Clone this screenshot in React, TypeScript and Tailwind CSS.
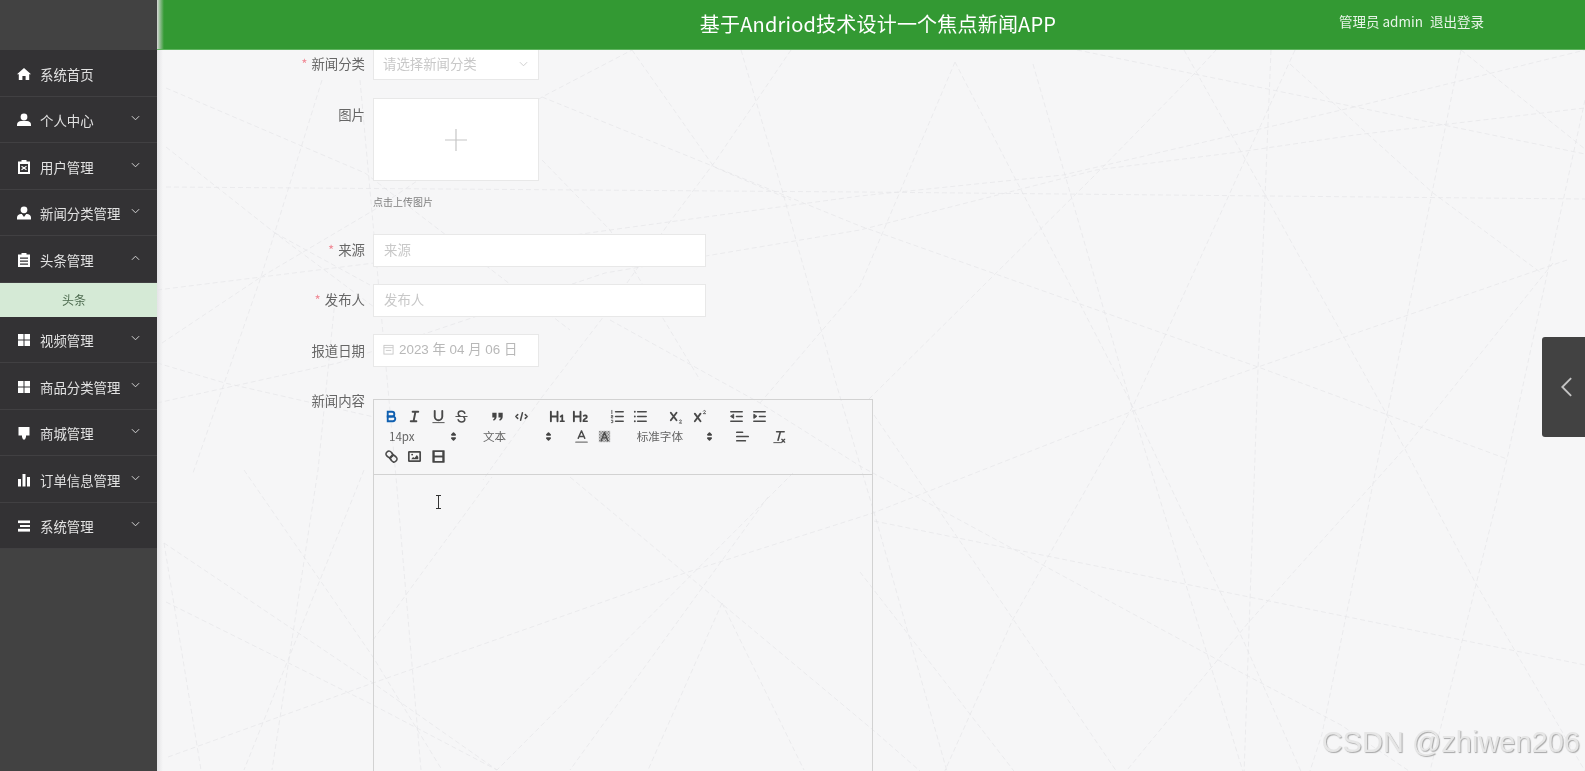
import React from 'react';
import { ReactNode } from 'react';

const lines: string[] = [
  // right half
  '955,62 860,286 760,403', '955,62 1128,397 1244,642 1340,860', '1033,64 1133,411 1244,775', '157,290 374,263 610,230 860,196 1063,175 1350,108 1585,50',
  '157,403 338,363 605,273 860,230 1096,170 1239,152 1355,135 1585,108', '166,187 860,192 1267,196 1585,199', '869,399 1091,179 1195,73 1216,50',
  '1184,50 1267,198 1387,415 1475,582 1585,771', '1295,50 1133,406 1013,619 943,775', '1271,50 1258,369 1244,775', '1077,50 1585,154',
  '1461,50 1387,415 1322,734 1310,771', '1585,100 1507,459 1429,775', '542,97 710,165 860,226 1258,367 1507,459',
  '168,757 373,683 685,573 873,513 1133,411 1258,367 1567,260', '1461,50 1585,149', '1290,64 1433,193 1540,272', '1553,263 1405,448 1248,623 1123,775',
  '874,521 1585,665', '610,320 760,403 860,466 1244,674 1341,725 1415,775', '874,415 1013,619 1119,775', '741,50 782,190 836,383 878,526 948,775', '860,572 1017,775',
  // lower left
  '164,543 373,683 497,770', '166,602 373,705 497,770', '373,640 492,477', '360,80 396,477 421,770', '244,470 373,657 442,770', '364,470 244,770',
  '335,300 318,470 272,770', '164,543 201,770', '570,477 873,730 920,771', '793,473 497,770', '722,603 648,770', '722,603 804,770', '768,497 570,770',
  // upper left
  '166,88 365,173 570,330', '166,147 275,233 374,307', '322,80 261,277 193,473', '162,343 261,277 374,210 542,97 632,50', '632,50 714,167 791,200',
  '791,50 714,163 669,223 601,320 542,397 483,480', '157,363 225,383 374,417', '542,160 610,230 700,380', '275,233 370,285',
];

const Ico = ({ children }: { children: ReactNode }) => (
  <svg viewBox="0 0 14 14" className="w-[14px] h-[14px] shrink-0" fill="#fff">{children}</svg>
);

const HomeIcon = () => <Ico><path d="M7 1l7 6.2h-1.8V13H8.6V9H5.4v4H1.8V7.2H0z" /></Ico>;
const UserIcon = () => <Ico><circle cx="7" cy="4" r="3.4" /><path d="M0 13v-1.6C0 9.5 2 8 4 8h6c2 0 4 1.5 4 3.4V13z" /></Ico>;
const ClipXIcon = () => <Ico><path fillRule="evenodd" d="M4.5 0h5v1.5H13V14H1V1.5h3.5zM3 4v8h8V4zm1.8 1.8L7 7.2l2.2-1.4.6.9L7.9 8l1.9 1.3-.6.9L7 8.8l-2.2 1.4-.6-.9L6.1 8 4.2 6.7z" /></Ico>;
const UserTieIcon = () => <Ico><circle cx="7" cy="3.8" r="3.4" /><path d="M0 13.5v-2C0 9.3 2 8 4 8h.8L7 11l2.2-3h.8c2 0 4 1.3 4 3.5v2z" /></Ico>;
const ClipIcon = () => <Ico><path fillRule="evenodd" d="M4.5 0h5v1.5H13V14H1V1.5h3.5zM3 4.5v1.3h8V4.5zm0 3v1.3h8V7.5zm0 3v1.3h8v-1.3z" /></Ico>;
const GridIcon = () => <Ico><rect x="1" y="1" width="5.5" height="5.5" /><rect x="7.5" y="1" width="5.5" height="5.5" /><rect x="1" y="7.5" width="5.5" height="5.5" /><rect x="7.5" y="7.5" width="5.5" height="5.5" /></Ico>;
const StoreIcon = () => <Ico><path d="M1.5 1h11v8.5H9V11l-1 2.5H6L5 11V9.5H1.5z" /></Ico>;
const ChartIcon = () => <Ico><rect x="1" y="6" width="3" height="7.5" /><rect x="5.5" y="1" width="3" height="12.5" /><rect x="10" y="4" width="3" height="9.5" /></Ico>;
const MenuIcon = () => <Ico><rect x="1" y="1.5" width="12" height="2.6" /><rect x="3" y="6" width="10" height="2" /><rect x="1" y="9.8" width="12" height="2.8" /></Ico>;

const Chevron = ({ up }: { up?: boolean }) => (
  <svg viewBox="0 0 10 6" className="w-[9px] h-[6px] mb-[4px] ml-auto mr-[17px]" fill="none" stroke="#d5d5d5" strokeWidth="1.1">
    <path d={up ? 'M1 5l4-4 4 4' : 'M1 1l4 4 4-4'} />
  </svg>
);

const menu1 = [
  { icon: <HomeIcon />, label: '系统首页', arrow: false },
  { icon: <UserIcon />, label: '个人中心', arrow: true },
  { icon: <ClipXIcon />, label: '用户管理', arrow: true },
  { icon: <UserTieIcon />, label: '新闻分类管理', arrow: true },
];
const menu2 = [
  { icon: <GridIcon />, label: '视频管理' },
  { icon: <GridIcon />, label: '商品分类管理' },
  { icon: <StoreIcon />, label: '商城管理' },
  { icon: <ChartIcon />, label: '订单信息管理' },
  { icon: <MenuIcon />, label: '系统管理' },
];

const MenuItem = ({ icon, label, arrow, up }: { icon: ReactNode; label: string; arrow?: boolean; up?: boolean }) => (
  <div className="h-[46.5px] flex items-center pl-[17px] pt-[2px] bg-[#333234] border-b border-[#414042] text-[13.4px] text-[#e2e2e2]">
    {icon}
    <span className="ml-[9px]">{label}</span>
    {arrow && <Chevron up={up} />}
  </div>
);

const Q = ({ children, w = 'w-[23.33px]' }: { children: ReactNode; w?: string }) => (
  <span className={`${w} h-[20px] flex items-center justify-center shrink-0`}>
    <svg viewBox="0 0 18 18" className="w-[17px] h-[17px]" fill="none" stroke="#4a4a4a" strokeWidth="2" strokeLinecap="round" strokeLinejoin="round">{children}</svg>
  </span>
);

const Group = ({ children }: { children: ReactNode }) => <span className="flex mr-[13px]">{children}</span>;

const Picker = ({ label, w }: { label: string; w: string }) => (
  <span className={`${w} h-[20px] mr-[13px] pl-2 flex items-center justify-between text-[11.6px] text-[#666] shrink-0`}>
    <span className="pt-[2px]">{label}</span>
    <svg viewBox="0 0 18 18" className="w-[15px] h-[15px] mr-[1px]" fill="none" stroke="#444" strokeWidth="2" strokeLinejoin="round" strokeLinecap="round">
      <polygon points="7 11 9 13 11 11 7 11" />
      <polygon points="7 7 9 5 11 7 7 7" />
    </svg>
  </span>
);

const Label = ({ text, required, className = '' }: { text: string; required?: boolean; className?: string }) => (
  <label className={`block w-[216px] shrink-0 pr-2 text-right text-[13.4px] text-[#666] ${className}`}>
    {required && <span className="text-[#f08a96] mr-1">*</span>}
    {text}
  </label>
);

const TextRow = ({ label, className }: { label: string; className: string }) => (
  <div className={`flex items-center ${className}`}>
    <Label text={label} required className="-mt-[2px]" />
    <div className="w-[333px] h-[33px] bg-white border border-[#e8e8e8] pl-[10px] pb-[2px] flex items-center text-[13.4px] text-[#c8c8c8]">{label}</div>
  </div>
);

export default function App() {
  return (
    <div className="h-screen w-full flex overflow-hidden bg-[#f6f6f7] blur-[0.3px] font-['Noto_Sans_CJK_SC','Noto_Sans',sans-serif]">
      <aside className="w-[157px] shrink-0 bg-[#424242]">
        <div className="h-[50px]" />
        {menu1.map(m => <MenuItem key={m.label} {...m} />)}
        <MenuItem icon={<ClipIcon />} label="头条管理" arrow up />
        <div className="h-[34px] bg-[#d5ead6] flex items-center justify-center pr-[9px] text-[12px] text-[#4d6b4f]">头条</div>
        {menu2.map(m => <MenuItem key={m.label} {...m} arrow />)}
      </aside>

      <div className="flex-1 flex flex-col min-w-0">
        <header className="h-[50px] shrink-0 relative flex items-center justify-center pl-[14px] pb-[2px] text-white bg-[linear-gradient(90deg,#d8d8d8,#339933_7px)] border-b border-[#5fb45f]">
          <h1 className="text-[20px] font-normal tracking-[0.2px]">基于Andriod技术设计一个焦点新闻APP</h1>
          <div className="absolute left-[1182px] top-[11px] flex gap-[7px] text-[13.5px] text-[#e8f4e8]">
            <span>管理员 admin</span>
            <span>退出登录</span>
          </div>
        </header>

        <main className="flex-1 relative overflow-hidden bg-[linear-gradient(90deg,#e4e4e6,#f6f6f7_6px)]">
          <svg viewBox="157 50 1428 721" className="absolute inset-0 w-[1428px] h-[721px]" fill="none" stroke="#e5e5e8" strokeWidth="0.7" strokeDasharray="5 3">
            {lines.map(p => <polyline key={p} points={p} />)}
          </svg>

          <form className="relative">
            <div className="flex items-center h-[30px]">
              <Label text="新闻分类" required className="-mt-[3px]" />
              <div className="w-[166px] h-[30px] bg-white border-b border-x border-[#e8e8e8] pl-[9px] pr-[10px] pb-[2px] flex items-center justify-between text-[13.4px] text-[#c8c8c8]">
                请选择新闻分类
                <svg viewBox="0 0 10 6" className="w-[9px] h-[6px]" fill="none" stroke="#c8c8c8"><path d="M1 1l4 4 4-4" /></svg>
              </div>
            </div>

            <div className="flex mt-[18px]">
              <Label text="图片" className="pt-[6px]" />
              <div className="w-[166px] h-[83px] bg-white border border-[#e8e8e8] flex items-center justify-center">
                <svg viewBox="0 0 22 22" className="w-[22px] h-[22px]" stroke="#c6c6c6" strokeWidth="1.2"><path d="M11 0v22M0 11h22" /></svg>
              </div>
            </div>

            <div className="flex mt-[15px] h-[12px]">
              <div className="w-[216px] shrink-0" />
              <span className="text-[10px] leading-[12px] text-[#808080]">点击上传图片</span>
            </div>

            <TextRow label="来源" className="mt-[26px]" />
            <TextRow label="发布人" className="mt-[17px]" />

            <div className="flex items-center mt-[17px]">
              <Label text="报道日期" className="-mt-[1px]" />
              <div className="w-[166px] h-[33px] bg-white border border-[#e8e8e8] pl-[9px] flex items-center text-[13.4px] text-[#b8b8b8] font-['Liberation_Sans','Noto_Sans_CJK_SC',sans-serif]">
                <svg viewBox="0 0 12 12" className="w-[11px] h-[11px] mr-[5px] mb-[3px]" fill="none" stroke="#c8c8c8"><rect x="1" y="1.5" width="10" height="9.5" /><path d="M1 4h10M3 7h6" /></svg>
                2023 年 04 月 06 日
              </div>
            </div>

            <div className="flex mt-[32px]">
              <Label text="新闻内容" className="-mt-[9px]" />
              <div className="relative w-[500px] h-[500px] border border-[#d2d2d2]">
                <div className="pl-[6px] pt-[6px] pb-[7px] h-[75px] border-b border-[#d2d2d2]">
                  <div className="flex h-[20px]">
                    <Group>
                      <span className="w-[23.33px] h-[20px] flex items-center justify-center">
                        <svg viewBox="0 0 18 18" className="w-[17px] h-[17px]" fill="none" stroke="#0f5fb0" strokeWidth="2">
                          <path d="M5,4H9.5A2.5,2.5,0,0,1,12,6.5v0A2.5,2.5,0,0,1,9.5,9H5V4Z" />
                          <path d="M5,9h5.5A2.5,2.5,0,0,1,13,11.5v0A2.5,2.5,0,0,1,10.5,14H5V9Z" />
                        </svg>
                      </span>
                      <Q><path d="M7 4h6M5 14h6M8 14l2-10" /></Q>
                      <Q><path d="M5,3V9a4,4,0,0,0,4,4h0a4,4,0,0,0,4-4V3" /><path d="M3 15.5h12" strokeWidth="1" /></Q>
                      <Q><path d="M3 9h12" strokeWidth="1" /><path d="M12.5 5.5C12 4 10.6 3.2 9 3.2 7 3.2 5.5 4.3 5.5 6c0 1.3.8 2.2 2 2.7M5.5 12.5C6 14 7.4 14.8 9 14.8c2 0 3.5-1.1 3.5-2.8 0-1-.4-1.7-1-2.3" strokeWidth="1.6" /></Q>
                    </Group>
                    <Group>
                      <Q><path d="M3.5 5h4.5v4c0 2.2-1 3.6-3 4.5l-.8-1.3c1-.6 1.6-1.3 1.7-2.2H3.5zM10 5h4.5v4c0 2.2-1 3.6-3 4.5l-.8-1.3c1-.6 1.6-1.3 1.7-2.2H10z" fill="#444" stroke="none" /></Q>
                      <Q><path d="M5 7L3 9l2 2M13 7l2 2-2 2M10 5l-2 8" strokeWidth="1.6" /></Q>
                    </Group>
                    <Group>
                      <Q><path fill="#444" stroke="none" d="M10,4V14a1,1,0,0,1-2,0V10H3v4a1,1,0,0,1-2,0V4A1,1,0,0,1,3,4V8H8V4a1,1,0,0,1,2,0Zm6.06787,9.209H14.98975V7.59863a.54085.54085,0,0,0-.605-.60547h-.62744a1.01119,1.01119,0,0,0-.748.29688L11.645,8.56641a.5435.5435,0,0,0-.022.8584l.28613.30762a.53861.53861,0,0,0,.84717.0332l.09912-.08789a1.2137,1.2137,0,0,0,.2417-.35254h.02246s-.01123.30859-.01123.60547V13.209H12.041a.54085.54085,0,0,0-.605.60547v.43945a.54085.54085,0,0,0,.605.60547h4.02686a.54085.54085,0,0,0,.605-.60547v-.43945A.54085.54085,0,0,0,16.06787,13.209Z" /></Q>
                      <Q><path fill="#444" stroke="none" d="M16.73975,13.81445v.43945a.54085.54085,0,0,1-.605.60547H11.855a.58392.58392,0,0,1-.64893-.60547V14.0127c0-2.90527,3.39941-3.42187,3.39941-4.55469a.77675.77675,0,0,0-.84717-.78125,1.17684,1.17684,0,0,0-.83594.38477c-.2749.26367-.561.374-.85791.13184l-.4292-.34082c-.30811-.24219-.38525-.51758-.1543-.81445a2.97155,2.97155,0,0,1,2.45361-1.17676,2.45393,2.45393,0,0,1,2.68408,2.40918c0,2.45312-3.1792,2.92676-3.27832,3.93848h2.79443A.54085.54085,0,0,1,16.73975,13.81445ZM9,3A.99974.99974,0,0,0,8,4V8H3V4A1,1,0,0,0,1,4V14a1,1,0,0,0,2,0V10H8v4a1,1,0,0,0,2,0V4A.99974.99974,0,0,0,9,3Z" /></Q>
                    </Group>
                    <Group>
                      <Q><path d="M7 4h8M7 9h8M7 14h8" strokeWidth="1.7" /><path d="M3 2.5v3.5M2.5 8h1.5v1.2H2.5v1.3H4M2.5 13H4v2.5H2.5" strokeWidth="0.9" /></Q>
                      <Q><path d="M6 4h9M6 9h9M6 14h9" strokeWidth="1.7" /><path d="M3 4h0M3 9h0M3 14h0" strokeWidth="2" /></Q>
                    </Group>
                    <Group>
                      <Q><path d="M3 5l6 8M9 5l-6 8" /><path d="M12 13.2c.4-.8 2.2-.8 2.2.3 0 1-1.6 1.4-2.2 2.5h2.4" strokeWidth="0.9" /></Q>
                      <Q><path d="M3 6l6 8M9 6l-6 8" /><path d="M12 3.2c.4-.8 2.2-.8 2.2.3 0 1-1.6 1.4-2.2 2.5h2.4" strokeWidth="0.9" /></Q>
                    </Group>
                    <Group>
                      <Q><path d="M3 4h12M3 14h12M9 9h6" strokeWidth="1.7" /><path d="M6 7v4L3 9z" fill="#444" strokeWidth="1" /></Q>
                      <Q><path d="M3 4h12M3 14h12M9 9h6" strokeWidth="1.7" /><path d="M3 7v4l3-2z" fill="#444" strokeWidth="1" /></Q>
                    </Group>
                  </div>

                  <div className="flex h-[20px] ml-[1px]">
                    <Picker label="14px" w="w-[81px]" />
                    <Picker label="文本" w="w-[82px]" />
                    <span className="flex mr-[12px]">
                      <Q><path d="M5.5 11L9 3l3.5 8M6.4 9h5.2" strokeWidth="1.5" /><path d="M3 15h12" strokeWidth="1.4" stroke="#777" /></Q>
                      <Q>
                        <defs>
                          <pattern id="dots" width="1.6" height="1.6" patternUnits="userSpaceOnUse">
                            <rect width="0.8" height="0.8" fill="#666" stroke="none" />
                            <rect x="0.8" y="0.8" width="0.8" height="0.8" fill="#666" stroke="none" />
                          </pattern>
                        </defs>
                        <rect x="3" y="3" width="12" height="12" fill="url(#dots)" stroke="none" />
                        <path d="M5.5 13.5L9 4.5l3.5 9M6.6 10.5h4.8" strokeWidth="1.4" />
                      </Q>
                    </span>
                    <Picker label="标准字体" w="w-[89px]" />
                    <Group>
                      <Q><path d="M3 4.5h6M3 9h12M3 13.5h9" strokeWidth="1.8" /></Q>
                    </Group>
                    <Group>
                      <Q><path d="M7 4h8M11 4L8.5 13" strokeWidth="1.7" /><path d="M4 15.5h8" strokeWidth="1" /><path d="M12.5 12l3 3M15.5 12l-3 3" strokeWidth="1.4" /></Q>
                    </Group>
                  </div>

                  <div className="flex h-[20px]">
                    <Q>
                      <path d="M7 11l4-4" strokeWidth="1.6" />
                      <path d="M8.9,4.577a3.476,3.476,0,0,1,.36,4.679A3.476,3.476,0,0,1,4.577,8.9C3.185,7.5,2.035,6.4,4.217,4.217S7.5,3.185,8.9,4.577Z" strokeWidth="1.7" />
                      <path d="M13.423,9.1a3.476,3.476,0,0,0-4.679-.36,3.476,3.476,0,0,0,.36,4.679c1.392,1.392,2.5,2.542,4.679.36S14.815,10.5,13.423,9.1Z" strokeWidth="1.7" />
                    </Q>
                    <Q><rect x="3" y="4" width="12" height="10" rx="0.5" strokeWidth="1.8" /><path d="M5.5 12l2-2.5 1.5 1 2.5-3 1.5 2v2.5z" fill="#444" stroke="none" /><circle cx="6.5" cy="7" r="1" fill="#444" stroke="none" /></Q>
                    <Q><path d="M3 2.5h12a.5.5 0 0 1 .5.5v12a.5.5 0 0 1-.5.5H3a.5.5 0 0 1-.5-.5V3a.5.5 0 0 1 .5-.5z" fill="#444" stroke="none" /><rect x="5" y="4.2" width="8" height="3.8" fill="#f6f6f7" stroke="none" /><rect x="5" y="10" width="8" height="3.8" fill="#f6f6f7" stroke="none" /></Q>
                  </div>
                </div>

                <svg viewBox="0 0 7 14" className="absolute left-[61px] top-[95px] w-[7px] h-[14px]" fill="none" stroke="#333" strokeWidth="1">
                  <path d="M1 .5h5M1 13.5h5M3.5.5v13" />
                </svg>
              </div>
            </div>
          </form>

          <div className="absolute right-0 top-[287px] w-[43px] h-[100px] rounded-l-[3px] bg-[#424242] flex items-center justify-end pr-[12px]">
            <svg viewBox="0 0 14 22" className="w-[13px] h-[22px]" fill="none" stroke="#c4c4c4" strokeWidth="2"><path d="M12 1.5L2.5 11l9.5 9.5" /></svg>
          </div>

          <div className="absolute right-[5px] bottom-[11px] text-[29px] leading-[36px] text-[#e6e6e6] font-['Liberation_Sans',sans-serif] [text-shadow:1px_1px_1px_#a8a8a8]">CSDN @zhiwen206</div>
        </main>
      </div>
    </div>
  );
}
